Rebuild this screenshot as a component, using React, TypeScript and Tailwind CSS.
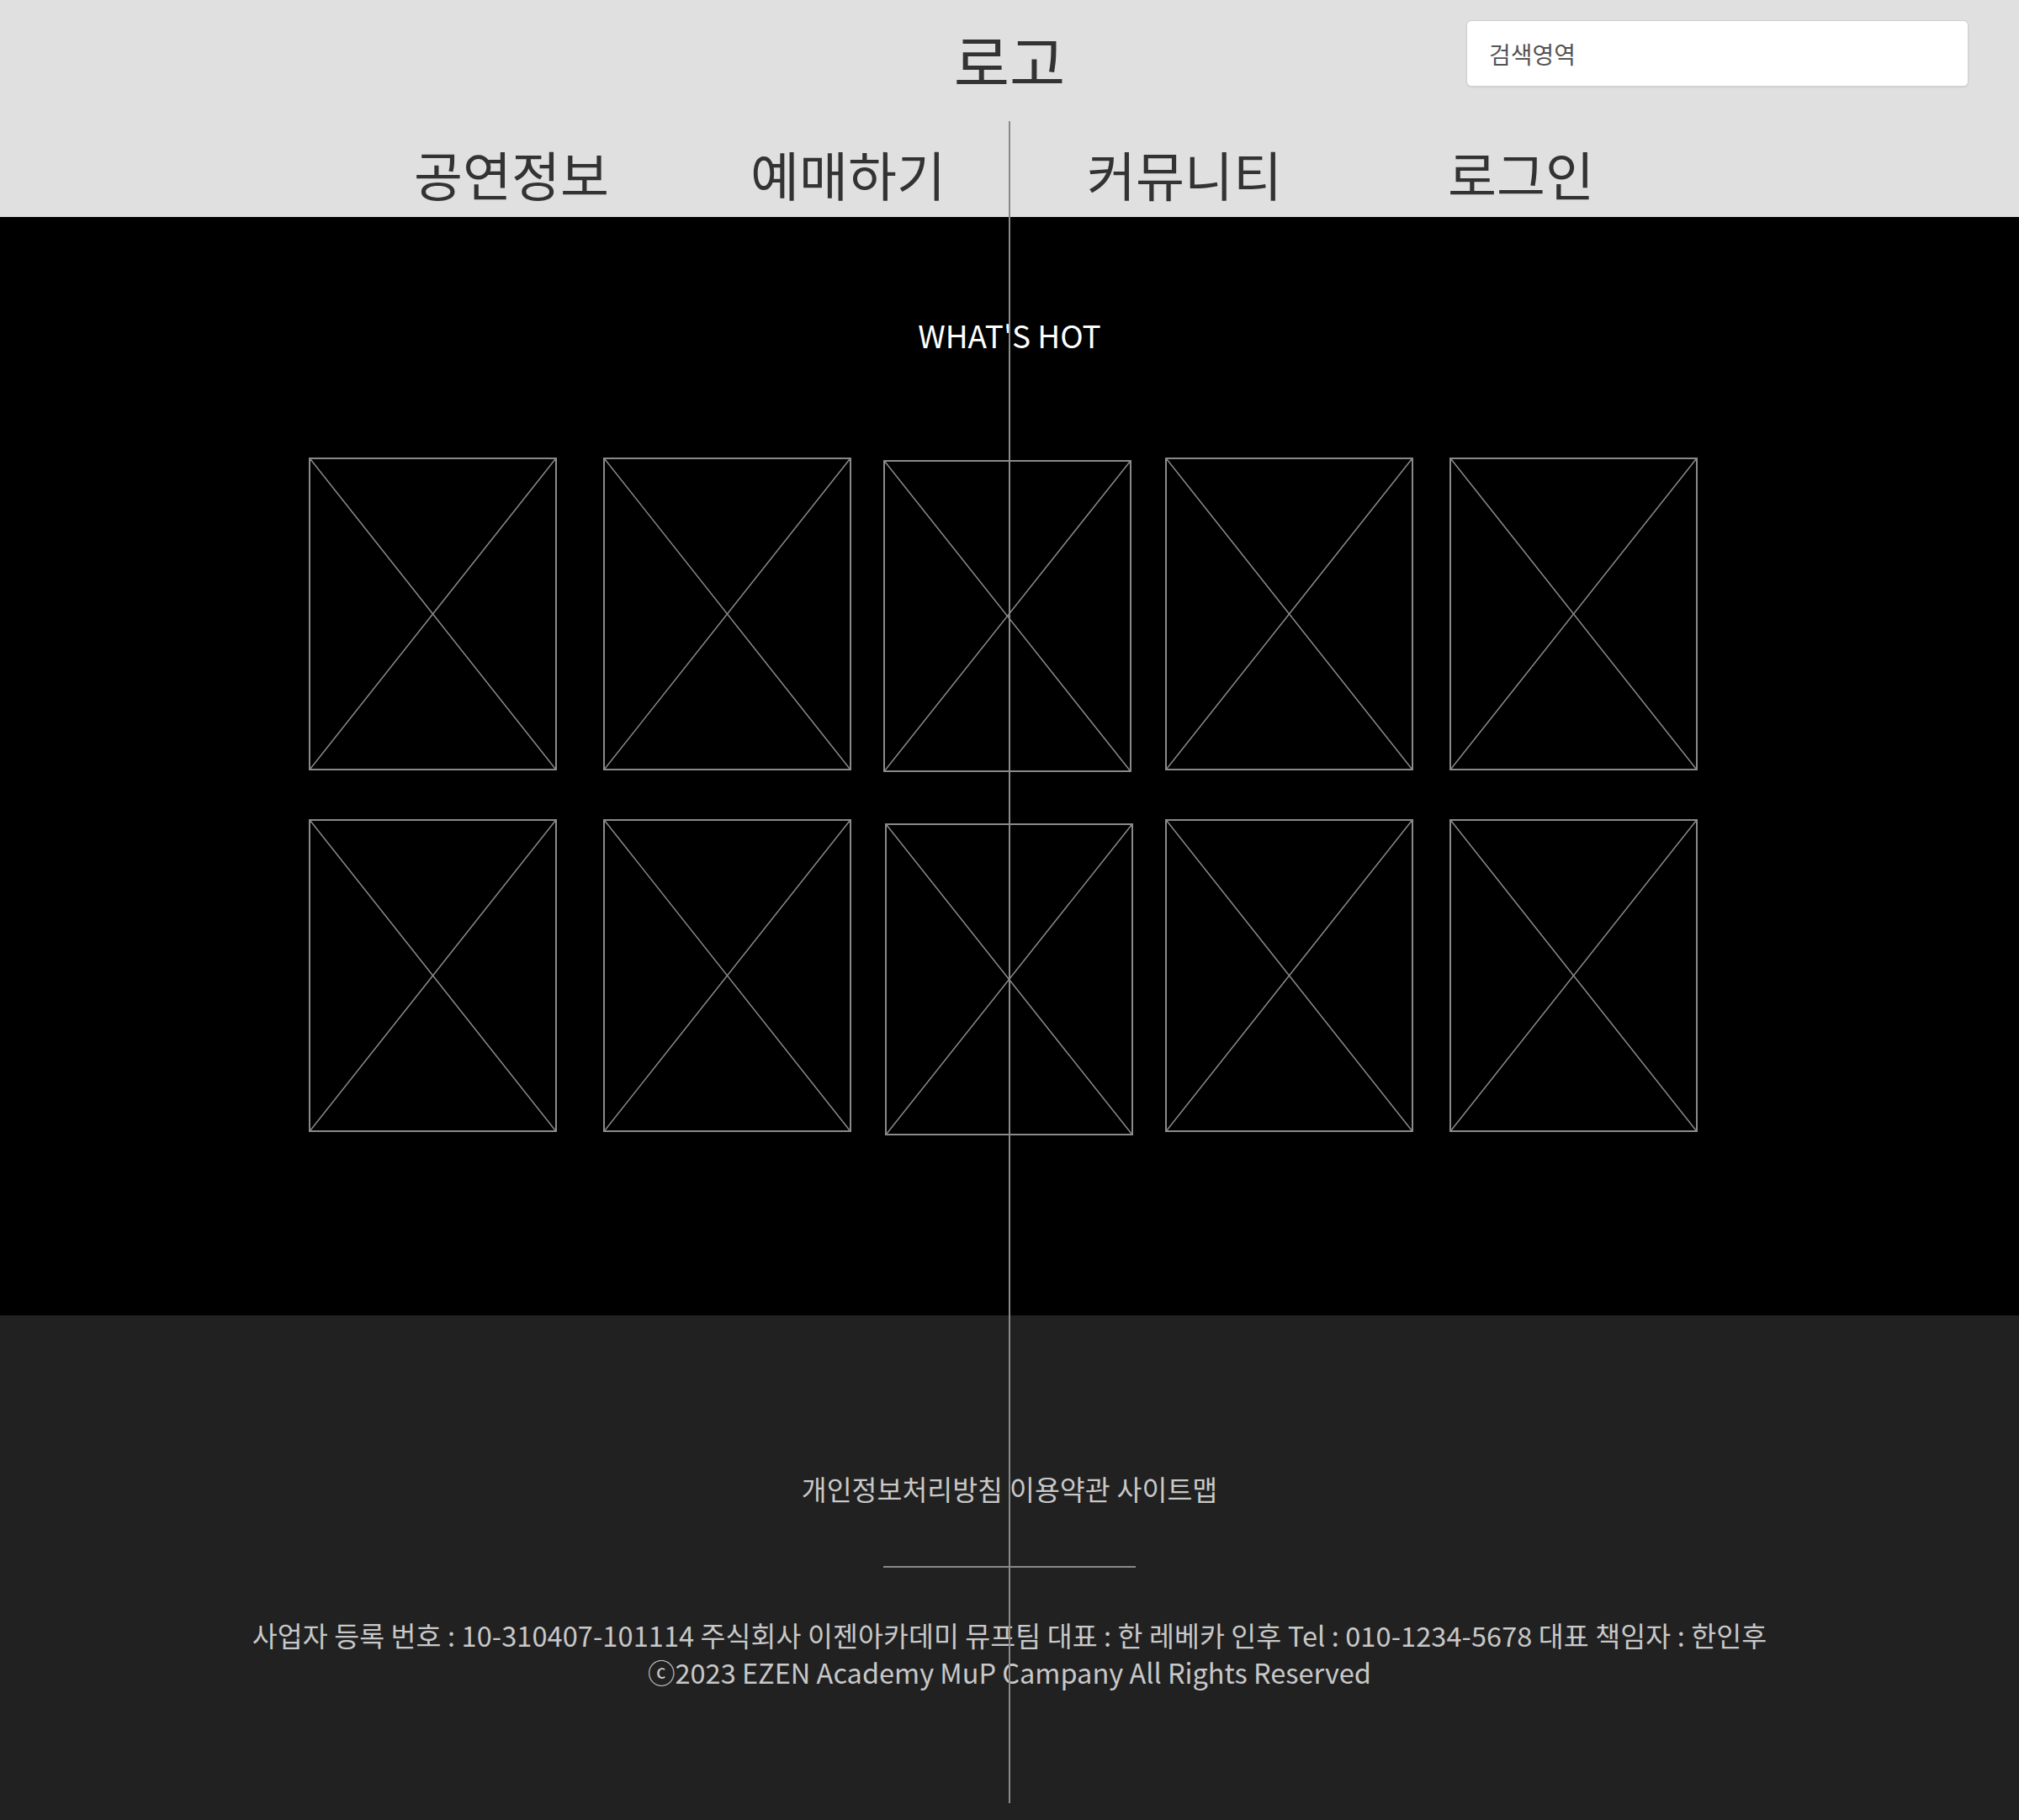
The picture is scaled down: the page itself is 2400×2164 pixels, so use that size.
import React from "react";

function Placeholder({ className }: { className: string }) {
  return (
    <div className={"relative shrink-0 border-2 border-[#8a8a8a] " + className}>
      <svg className="absolute inset-0 h-full w-full" viewBox="0 0 100 100" preserveAspectRatio="none">
        <line x1="0" y1="0" x2="100" y2="100" stroke="#8a8a8a" strokeWidth="1.5" vectorEffect="non-scaling-stroke" />
        <line x1="100" y1="0" x2="0" y2="100" stroke="#8a8a8a" strokeWidth="1.5" vectorEffect="non-scaling-stroke" />
      </svg>
    </div>
  );
}

export default function App() {
  const nav = ["공연정보", "예매하기", "커뮤니티", "로그인"];
  return (
    <div className="relative w-full font-['Noto_Sans_CJK_KR',sans-serif]">
      {/* Header */}
      <header className="h-[258px] bg-[#e0e0e0]">
        <div className="grid grid-cols-[1fr_auto_1fr] items-start">
          <div />
          <div className="mt-[35px] text-[72px] leading-[72px] text-[#333333]">로고</div>
          <div className="flex justify-end pr-[60px] pt-[24px]">
            <input
              type="text"
              placeholder="검색영역"
              className="h-[79px] w-[597px] rounded-[6px] border border-[#cfcfcf] bg-white pl-[26px] text-[28px] text-[#444] shadow-[0_1px_2px_rgba(0,0,0,0.08)] outline-none placeholder:text-[#555555]"
            />
          </div>
        </div>
        <nav className="mt-[67px] flex justify-center pl-[16px]">
          {nav.map((n) => (
            <div key={n} className="w-[400px] text-center text-[63px] leading-[63px] text-[#333333]">
              {n}
            </div>
          ))}
        </nav>
      </header>

      {/* Main */}
      <main className="bg-black pb-[218px] pt-[110px]">
        <h2 className="text-center text-[37px] leading-[60px] text-white">WHAT'S HOT</h2>
        <div className="mt-[116px] flex h-[372px] items-start pl-[367px]">
          <Placeholder className="h-[372px] w-[295px]" />
          <Placeholder className="ml-[55px] h-[372px] w-[295px]" />
          <Placeholder className="ml-[38px] mt-[3px] h-[371px] w-[295px]" />
          <Placeholder className="ml-[40px] h-[372px] w-[295px]" />
          <Placeholder className="ml-[43px] h-[372px] w-[295px]" />
        </div>
        <div className="mt-[58px] flex h-[372px] items-start pl-[367px]">
          <Placeholder className="h-[372px] w-[295px]" />
          <Placeholder className="ml-[55px] h-[372px] w-[295px]" />
          <Placeholder className="ml-[40px] mt-[5px] h-[371px] w-[295px]" />
          <Placeholder className="ml-[38px] h-[372px] w-[295px]" />
          <Placeholder className="ml-[43px] h-[372px] w-[295px]" />
        </div>
      </main>

      {/* Footer */}
      <footer className="h-[600px] bg-[#212121] pt-[182px] text-[#c8c8c8]">
        <div className="flex justify-center gap-[8px] text-[32.5px] leading-[48px]">
          <a>개인정보처리방침</a>
          <a>이용약관</a>
          <a>사이트맵</a>
        </div>
        <div className="mx-auto mt-[68px] h-[2px] w-[300px] bg-[#8a8a8a]" />
        <div className="mt-[58px] text-center text-[32.5px] leading-[44px]">
          <p className="tracking-[0.1px]">사업자 등록 번호 : 10-310407-101114 주식회사 이젠아카데미 뮤프팀 대표 : 한 레베카 인후 Tel : 010-1234-5678 대표 책임자 : 한인후</p>
          <p>ⓒ2023 EZEN Academy MuP Campany All Rights Reserved</p>
        </div>
      </footer>

      {/* center guide line */}
      <div className="pointer-events-none absolute left-[1199px] top-[144px] h-[2000px] w-[2px] bg-[#8a8a8a]" />
    </div>
  );
}
